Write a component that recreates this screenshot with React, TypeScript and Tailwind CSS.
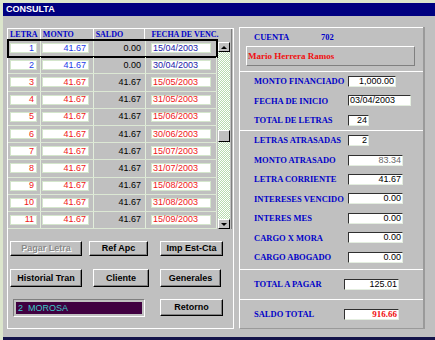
const rows = [
  ["1", "41.67", "0.00", "15/04/2003"],
  ["2", "41.67", "0.00", "30/04/2003"],
  ["3", "41.67", "41.67", "15/05/2003"],
  ["4", "41.67", "41.67", "31/05/2003"],
  ["5", "41.67", "41.67", "15/06/2003"],
  ["6", "41.67", "41.67", "30/06/2003"],
  ["7", "41.67", "41.67", "15/07/2003"],
  ["8", "41.67", "41.67", "31/07/2003"],
  ["9", "41.67", "41.67", "15/08/2003"],
  ["10", "41.67", "41.67", "31/08/2003"],
  ["11", "41.67", "41.67", "15/09/2003"],
];

const serif = "font-['Liberation_Serif','Times_New_Roman',serif] font-bold text-[8.5px] text-[#0000c8] leading-none";
const head = "font-['Liberation_Serif','Times_New_Roman',serif] font-bold text-[8px] text-[#0000c8] leading-none";
const btn =
  "flex items-center justify-center bg-[#c0c0c0] border border-t-white border-l-white border-r-black border-b-black shadow-[inset_-1px_-1px_#808080] text-[9px] font-bold leading-none";
const field =
  "h-[11px] bg-white border border-t-[#303030] border-l-[#303030] border-r-[#e4eee0] border-b-[#e4eee0] text-[9px] leading-none flex items-center pr-[1px]";
const checker =
  "bg-[repeating-conic-gradient(#b6dbae_0%_25%,#ffffff_0%_50%)] bg-[length:2px_2px]";

function Field({ label, value, w, lw = 94, left = false, cls = "text-black" }: { label: string; value: string; w: number; lw?: number; left?: boolean; cls?: string }) {
  return (
    <div className="flex flex-1 items-center pl-[14px]">
      <div className={`${serif} whitespace-nowrap`} style={{ width: lw }}>
        {label}
      </div>
      <div className={`${field} ${left ? "justify-start pl-[1px]" : "justify-end"} ${cls}`} style={{ width: w }}>
        {value}
      </div>
    </div>
  );
}

function Arrow({ up }: { up: boolean }) {
  return (
    <div className="flex h-[10px] w-[12px] items-center justify-center bg-[#c0c0c0] border border-t-white border-l-white border-r-black border-b-black">
      <div
        className={
          up
            ? "h-0 w-0 border-x-[3px] border-x-transparent border-b-[3px] border-b-black"
            : "h-0 w-0 border-x-[3px] border-x-transparent border-t-[3px] border-t-black"
        }
      />
    </div>
  );
}

export default function App() {
  return (
    <div className="h-[340px] w-[435px] overflow-hidden bg-[#dce6cc] pl-[3px] pt-[3px] font-['Liberation_Sans',Arial,sans-serif]">
      <div className="flex h-full flex-col border-b-[3px] border-b-[#14144a] bg-[#c0c0c0]">
        <div className="flex h-[13px] items-center bg-[#000080] pl-[3px] text-[9px] font-bold leading-none text-white">
          CONSULTA
        </div>

        <div className="flex flex-1 pl-[4px] pt-[11px]">
          {/* Panel izquierdo */}
          <div className="mt-[1px] flex h-[301px] w-[227px] flex-col border border-white">
            <div className="flex w-[224px] flex-col border-r border-r-[#808080]">
              {/* Cabecera */}
              <div className="flex h-[11px] items-center">
                <div className={`${head} flex h-full w-[33px] items-center border-r border-r-white pl-[2px]`}>LETRA</div>
                <div className={`${head} flex h-full w-[53px] items-center border-r border-r-white pl-[2px]`}>MONTO</div>
                <div className={`${head} flex h-full w-[52px] items-center border-r border-r-white pl-[2px]`}>SALDO</div>
                <div className={`${head} flex h-full w-[86px] items-center whitespace-nowrap pl-[6px]`}>FECHA DE VENC.</div>
              </div>

              <div className="flex h-[189px]">
                <div className="flex w-[209px] flex-col">
                  {rows.map((r, i) => {
                    const color = i < 2 ? "text-[#1c3ce8]" : "text-[#f01818]";
                    const date = i < 2 ? "text-[#1a1aa8]" : "text-[#f01818]";
                    return (
                      <div
                        key={r[0]}
                        className={`flex flex-1 items-center border-b border-b-[#dce8d4] ${i === 0 ? "outline-2 -outline-offset-1 outline-black" : ""}`}
                      >
                        <div className="flex h-full w-[33px] items-center border-r border-r-[#e2eedb]">
                          <div className={`ml-[2px] flex h-[10px] w-[27px] items-center justify-end border border-[#d4e6cc] bg-white pr-[2px] text-[9px] leading-none ${color}`}>
                            {r[0]}
                          </div>
                        </div>
                        <div className="flex h-full w-[53px] items-center border-r border-r-[#e2eedb]">
                          <div className={`ml-[1px] flex h-[10px] w-[47px] items-center justify-end border border-[#d4e6cc] bg-white pr-[2px] text-[9px] leading-none ${color}`}>
                            {r[1]}
                          </div>
                        </div>
                        <div className="flex h-full w-[52px] items-center justify-end border-r border-r-[#e2eedb] pr-[4px] text-[9px] leading-none text-black">
                          {r[2]}
                        </div>
                        <div className="flex h-full w-[71px] items-center border-r border-r-[#e2eedb]">
                          <div className={`ml-[5px] flex h-[10px] w-[60px] items-center border border-[#d4e6cc] bg-white pl-[1px] text-[9px] leading-none ${date}`}>
                            {r[3]}
                          </div>
                        </div>
                      </div>
                    );
                  })}
                </div>

                {/* Barra de desplazamiento */}
                <div className="flex w-[14px] flex-col pl-[1px] pt-[2px]">
                  <Arrow up />
                  <div className={`h-[78px] w-[12px] ${checker}`} />
                  <div className="h-[12px] w-[12px] border border-t-white border-l-white border-r-black border-b-black bg-[#c0c0c0]" />
                  <div className={`w-[12px] flex-1 ${checker}`} />
                  <Arrow up={false} />
                </div>
              </div>
            </div>

            {/* Botones */}
            <div className="mt-[12px] flex pl-[2px]">
              <div className={`${btn} h-[15px] w-[72px] text-[#8a8a8a] [text-shadow:1px_1px_0_#ffffff]`}>Pagar Letra</div>
              <div className={`${btn} ml-[7px] h-[15px] w-[59px]`}>Ref Apc</div>
              <div className={`${btn} ml-[12px] h-[15px] w-[63px]`}>Imp Est-Cta</div>
            </div>
            <div className="mt-[13px] flex pl-[2px]">
              <div className={`${btn} h-[18px] w-[72px]`}>Historial Tran</div>
              <div className={`${btn} ml-[11px] h-[18px] w-[56px]`}>Cliente</div>
              <div className={`${btn} ml-[11px] h-[18px] w-[61px]`}>Generales</div>
            </div>
            <div className="mt-[12px] flex items-start pl-[5px]">
              <div className="flex h-[18px] w-[132px] border border-t-[#808080] border-l-[#808080] border-r-white border-b-white p-[2px]">
                <div className="flex flex-1 items-center bg-[#400040] pl-[2px] text-[9px] leading-none text-[#3cc8c8]">
                  2&nbsp;&nbsp;MOROSA
                </div>
              </div>
              <div className={`${btn} ml-[15px] h-[17px] w-[63px]`}>Retorno</div>
            </div>
          </div>

          {/* Panel derecho */}
          <div className="ml-[5px] flex h-[302px] w-[186px] flex-col border-l border-l-white border-r-2 border-r-[#9a9a9a] border-b border-b-[#9a9a9a]">
            <div className="flex h-[44px] flex-col border-t border-t-white pt-[4px]">
              <div className="flex h-[10px] items-center pl-[14px]">
                <span className={`${serif} w-[67px]`}>CUENTA</span>
                <span className={serif}>702</span>
              </div>
              <div className="ml-[6px] mt-[4px] flex h-[20px] w-[169px] items-center border border-t-white border-l-white border-r-[#808080] border-b-[#808080] pl-[1px] font-['Liberation_Serif','Times_New_Roman',serif] text-[9px] font-bold leading-none text-[#f01010]">
                Mario Herrera Ramos
              </div>
            </div>

            <div className="flex h-[59px] flex-col border-t border-t-white">
              <Field label="MONTO FINANCIADO" value="1,000.00" w={48} />
              <Field label="FECHA DE INICIO" value="03/04/2003" w={63} left />
              <Field label="TOTAL DE LETRAS" value="24" w={21} />
            </div>

            <div className="flex h-[139px] flex-col border-t border-t-white pb-[2px]">
              <Field label="LETRAS ATRASADAS" value="2" w={21} />
              <Field label="MONTO ATRASADO" value="83.34" w={55} cls="text-[#686868]" />
              <Field label="LETRA CORRIENTE" value="41.67" w={55} />
              <Field label="INTERESES VENCIDO" value="0.00" w={55} />
              <Field label="INTERES MES" value="0.00" w={55} />
              <Field label="CARGO X MORA" value="0.00" w={55} />
              <Field label="CARGO ABOGADO" value="0.00" w={55} />
            </div>

            <div className="flex h-[30px] flex-col border-t border-t-white">
              <Field label="TOTAL A PAGAR" value="125.01" w={55} lw={90} />
            </div>

            <div className="flex flex-1 flex-col border-t border-t-white">
              <Field
                label="SALDO TOTAL"
                value="916.66"
                w={55}
                lw={90}
                cls="font-['Liberation_Serif','Times_New_Roman',serif] font-bold text-[#f01010]"
              />
            </div>
          </div>
        </div>
      </div>
    </div>
  );
}
